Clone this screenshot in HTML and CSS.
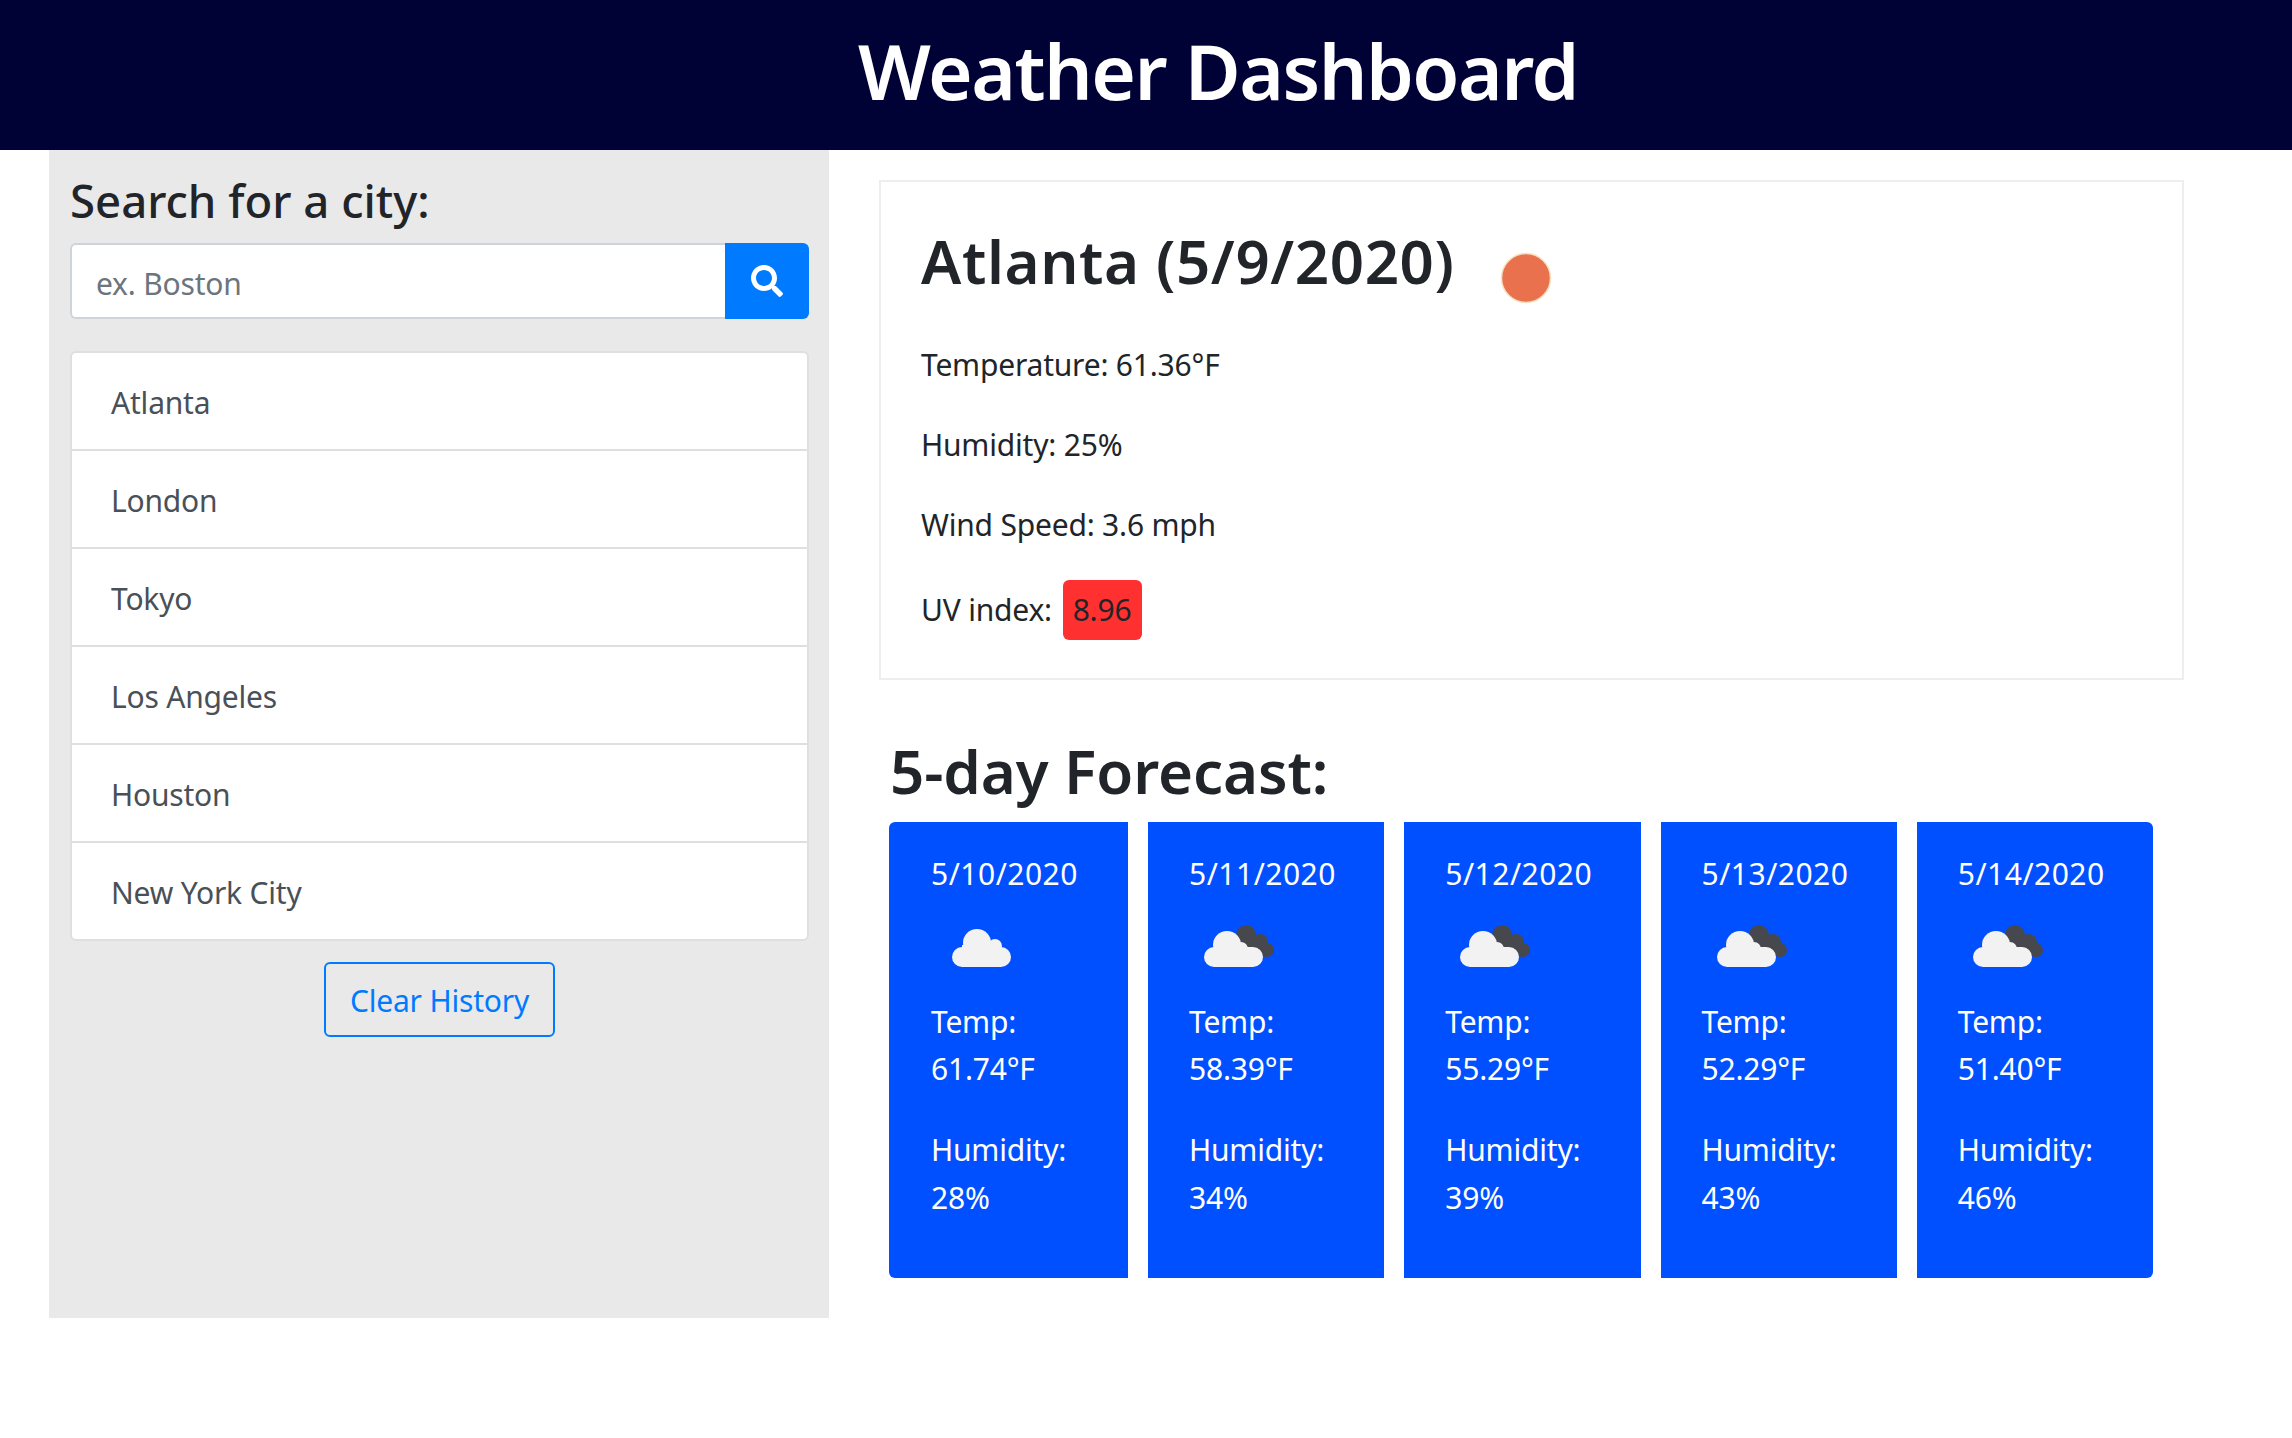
FILE: index.html
```html
<!DOCTYPE html>
<html>
  <head>
    <link rel="stylesheet" href="styles.css">
    <title>Weather Dashboard</title>
  </head>
  <body>
    <svg class="defs" width="0" height="0">
      <symbol id="cloud" viewBox="0 0 70 42">
        <g fill="#f2f2f2">
          <circle cx="16" cy="32" r="10"/>
          <circle cx="31" cy="18" r="14"/>
          <circle cx="49" cy="21" r="7"/>
          <circle cx="55" cy="32" r="10"/>
          <rect x="16" y="20" width="39" height="22"/>
        </g>
      </symbol>
      <symbol id="cloudDark" viewBox="0 0 70 42">
        <g fill="#46484e">
          <circle cx="42" cy="10" r="10"/>
          <circle cx="56" cy="17" r="8"/>
          <circle cx="63" cy="25" r="7"/>
          <path d="M36 3L50 10L66 19L62 32L40 24Z"/>
        </g>
        <g fill="#f2f2f2">
          <circle cx="10" cy="32" r="10"/>
          <circle cx="23" cy="20" r="14"/>
          <circle cx="37" cy="24" r="7"/>
          <circle cx="49" cy="32" r="10"/>
          <rect x="10" y="22" width="39" height="20"/>
        </g>
      </symbol>
    </svg>

    <header class="topbar">
      <h1>Weather Dashboard</h1>
    </header>

    <div class="content">
      <aside class="sidebar">
        <h3>Search for a city:</h3>
        <form class="search">
          <input type="text" placeholder="ex. Boston">
          <button type="button" class="search-btn">
            <svg viewBox="0 0 512 512" width="32" height="32"><path fill="#fff" d="M505 442.7L405.3 343c-4.5-4.5-10.6-7-17-7H372c27.6-35.3 44-79.7 44-128C416 93.1 322.9 0 208 0S0 93.1 0 208s93.1 208 208 208c48.3 0 92.7-16.4 128-44v16.3c0 6.4 2.5 12.5 7 17l99.7 99.7c9.4 9.4 24.6 9.4 33.9 0l28.3-28.3c9.4-9.4 9.4-24.6.1-34zM208 336c-70.7 0-128-57.2-128-128 0-70.7 57.2-128 128-128 70.7 0 128 57.2 128 128 0 70.7-57.2 128-128 128z"/></svg>
          </button>
        </form>
        <ul class="history">
          <li>Atlanta</li>
          <li>London</li>
          <li>Tokyo</li>
          <li>Los Angeles</li>
          <li>Houston</li>
          <li>New York City</li>
        </ul>
        <button type="button" class="clear-btn">Clear History</button>
      </aside>

      <main class="weather">
        <section class="today">
          <div class="today-title">
            <h2>Atlanta (5/9/2020)</h2>
            <svg class="sun" viewBox="0 0 52 52" width="52" height="52"><circle cx="26" cy="26" r="24.5" fill="#ea714e" stroke="#f6e2bd" stroke-width="1.5"/></svg>
          </div>
          <p>Temperature: 61.36°F</p>
          <p>Humidity: 25%</p>
          <p>Wind Speed: 3.6 mph</p>
          <p class="uv">UV index: <span class="uv-badge">8.96</span></p>
        </section>

        <h2 class="forecast-title">5-day Forecast:</h2>
        <div class="forecast">
          <div class="day">
            <p class="date">5/10/2020</p>
            <svg class="icon" width="70" height="42"><use href="#cloud"/></svg>
            <p>Temp:<br>61.74°F</p>
            <p>Humidity:<br>28%</p>
          </div>
          <div class="day">
            <p class="date">5/11/2020</p>
            <svg class="icon" width="70" height="42"><use href="#cloudDark"/></svg>
            <p>Temp:<br>58.39°F</p>
            <p>Humidity:<br>34%</p>
          </div>
          <div class="day">
            <p class="date">5/12/2020</p>
            <svg class="icon" width="70" height="42"><use href="#cloudDark"/></svg>
            <p>Temp:<br>55.29°F</p>
            <p>Humidity:<br>39%</p>
          </div>
          <div class="day">
            <p class="date">5/13/2020</p>
            <svg class="icon" width="70" height="42"><use href="#cloudDark"/></svg>
            <p>Temp:<br>52.29°F</p>
            <p>Humidity:<br>43%</p>
          </div>
          <div class="day">
            <p class="date">5/14/2020</p>
            <svg class="icon" width="70" height="42"><use href="#cloudDark"/></svg>
            <p>Temp:<br>51.40°F</p>
            <p>Humidity:<br>46%</p>
          </div>
        </div>
      </main>
    </div>
  </body>
</html>
```

FILE: styles.css
```css
* {
  box-sizing: border-box;
}
html,
body {
  margin: 0;
  padding: 0;
}
body {
  font-family: "Noto Sans", "Open Sans", sans-serif;
  font-size: 30px;
  line-height: 36px;
  color: #212529;
  background: #fff;
  letter-spacing: -0.2px;
}
h1,
h2,
h3,
p,
ul {
  margin: 0;
  padding: 0;
}
.defs {
  display: block;
  height: 0;
}

/* Header */
.topbar {
  height: 150px;
  background: #000236;
  color: #fff;
  text-align: center;
  padding-left: 144px;
}
.topbar h1 {
  font-size: 76.5px;
  font-weight: 600;
  line-height: 140px;
  letter-spacing: -1.5px;
}

/* Layout */
.content {
  display: flex;
}
.sidebar {
  width: 780px;
  height: 1168px;
  margin-left: 49px;
  padding: 25px 20px 0 21px;
  background: #e9e9e9;
  display: flex;
  flex-direction: column;
}
.sidebar h3 {
  font-size: 45.5px;
  font-weight: 500;
  line-height: 50px;
  margin-bottom: 18px;
  letter-spacing: 0;
}

/* Search box */
.search {
  display: flex;
  height: 76px;
  margin-bottom: 32px;
}
.search input {
  flex: 1;
  min-width: 0;
  border: 2px solid #ced4da;
  border-right: none;
  border-radius: 6px 0 0 6px;
  padding: 6px 24px 0;
  font: inherit;
  letter-spacing: inherit;
  color: #495057;
  background: #fff;
}
.search input::placeholder {
  color: #6c757d;
  opacity: 1;
}
.search-btn {
  width: 84px;
  border: none;
  border-radius: 0 6px 6px 0;
  background: #007bff;
  display: flex;
  align-items: center;
  justify-content: center;
  padding: 0;
}

/* History list */
.history {
  list-style: none;
  background: #fff;
  border: 2px solid #dfdfdf;
  border-radius: 6px;
  margin-bottom: 21px;
}
.history li {
  height: 98px;
  padding: 32px 39px 0;
  color: #495057;
  border-bottom: 2px solid #dfdfdf;
}
.history li:last-child {
  height: 96px;
  border-bottom: none;
}
.clear-btn {
  align-self: center;
  width: 231px;
  height: 75px;
  border: 2px solid #007bff;
  border-radius: 6px;
  background: transparent;
  color: #007bff;
  font: inherit;
  letter-spacing: inherit;
  padding: 2px 0 0;
}

/* Current weather */
.weather {
  width: 1305px;
  margin-left: 50px;
  padding-top: 30px;
}
.today {
  height: 500px;
  border: 2px solid #eeeeee;
  padding: 48px 40px 0;
}
.today-title {
  display: flex;
  align-items: flex-start;
  margin-bottom: 43px;
}
.today-title h2,
.forecast-title {
  font-size: 60px;
  font-weight: 600;
  line-height: 62px;
  letter-spacing: -0.1px;
}
.today-title h2 {
  letter-spacing: 0.6px;
}
.sun {
  margin: 22px 0 0 45px;
}
.today p {
  margin-bottom: 44px;
}
.today p.uv {
  margin: -7px 0 0;
}
.uv-badge {
  display: inline-block;
  width: 79px;
  height: 60px;
  margin-left: 3px;
  padding: 12px 0;
  text-align: center;
  background: #ff3030;
  border-radius: 6px;
}

/* 5-day forecast */
.forecast-title {
  margin: 60px 0 20px 11px;
}
.forecast {
  display: grid;
  grid-template-columns: 239px repeat(4, 1fr);
  column-gap: 20px;
  margin: 0 31px 0 10px;
}
.day {
  height: 456px;
  background: #0050ff;
  color: #fff;
  padding: 16px 20px 0 41px;
  line-height: 47.5px;
}
.day:first-child {
  padding-left: 42px;
  border-radius: 6px 0 0 6px;
}
.day:last-child {
  border-radius: 0 6px 6px 0;
}
.day p {
  margin-bottom: 33.5px;
}
.day p.date {
  margin: 12px 0 27px;
  letter-spacing: 0.5px;
}
.icon {
  display: block;
  margin: 0 0 31px 15px;
}
```
